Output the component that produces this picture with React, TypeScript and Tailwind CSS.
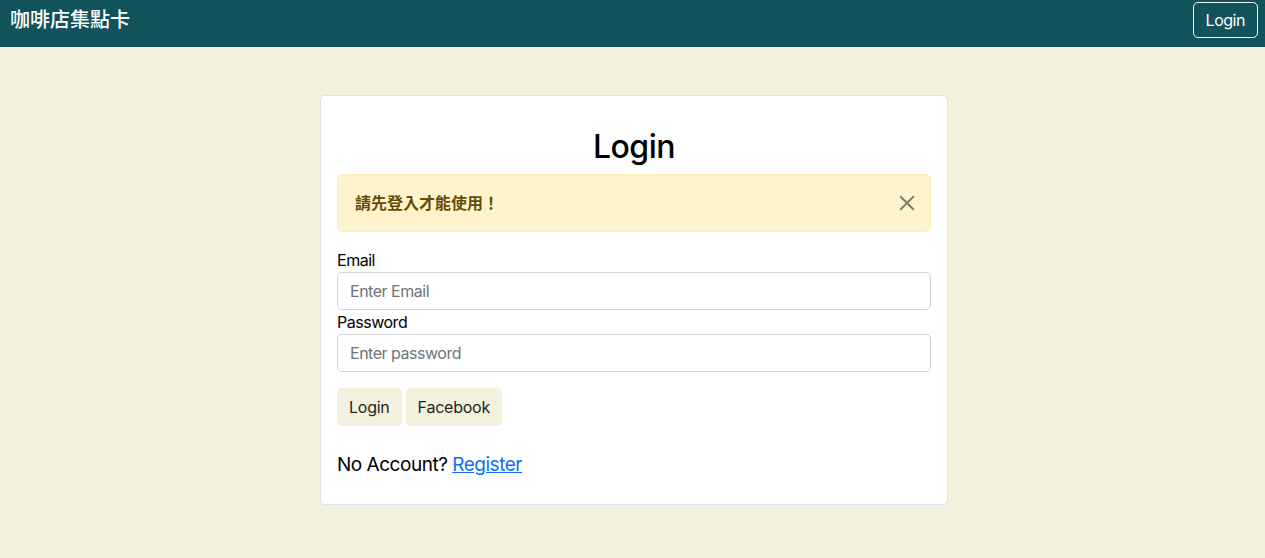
import React from "react";

export default function App() {
  const font = { fontFamily: 'Inter, "Noto Sans CJK TC", "Noto Sans", sans-serif' };
  return (
    <div className="min-h-[558px] bg-[#f4f0de] text-[#212529] tracking-[-0.03em]" style={font}>
      <nav className="h-[47px] bg-[#12525a] flex items-start justify-between pl-[10px] pr-[7px] pt-[2px]">
        <div className="h-[36px] flex items-center text-white text-[20px] leading-none tracking-normal font-medium">咖啡店集點卡</div>
        <button className="h-[36px] px-[12px] border border-white rounded-[5px] text-white text-[16px] leading-none">
          Login
        </button>
      </nav>
      <div className="pt-[48px]">
        <div className="w-[628px] ml-[320px] bg-white border border-[#dee2e6] rounded-[5px] px-[16px] pt-[16px] pb-[24px]">
          <h2 className="text-[32px] leading-[38px] font-medium text-center mt-[16px] mb-[8px] text-black">Login</h2>
          <div className="h-[58px] bg-[#fff3cd] border border-[#ffecb5] rounded-[5px] flex items-center justify-between pl-[17px] pr-[14px] mb-[16px]">
            <span className="text-[#664d03] font-bold text-[16px] tracking-normal">請先登入才能使用！</span>
            <svg width="18" height="18" viewBox="0 0 16 16" className="opacity-50">
              <path d="M2 2 L14 14 M14 2 L2 14" stroke="#000" strokeWidth="1.6" />
            </svg>
          </div>
          <label className="block text-[16px] leading-[24px] text-black">Email</label>
          <input
            className="block w-full h-[38px] border border-[#ced4da] rounded-[5px] px-[12px] text-[16px] placeholder-[#6c757d] outline-none tracking-[-0.03em]"
            placeholder="Enter Email"
          />
          <label className="block text-[16px] leading-[24px] text-black">Password</label>
          <input
            type="password"
            className="block w-full h-[38px] border border-[#ced4da] rounded-[5px] px-[12px] text-[16px] placeholder-[#6c757d] outline-none tracking-[-0.03em]"
            placeholder="Enter password"
          />
          <div className="flex gap-[4px] mt-[16px]">
            <button className="h-[38px] px-[12px] bg-[#f4f0de] rounded-[5px] text-[16px] text-[#212529] tracking-[-0.015em]">Login</button>
            <button className="h-[38px] px-[12px] bg-[#f4f0de] rounded-[5px] text-[16px] text-[#212529] tracking-[-0.015em]">Facebook</button>
          </div>
          <p className="mt-[24px] text-[19px] leading-[30px] text-black">
            No Account? <a href="#" className="text-[#0d6efd] underline">Register</a>
          </p>
        </div>
      </div>
    </div>
  );
}
